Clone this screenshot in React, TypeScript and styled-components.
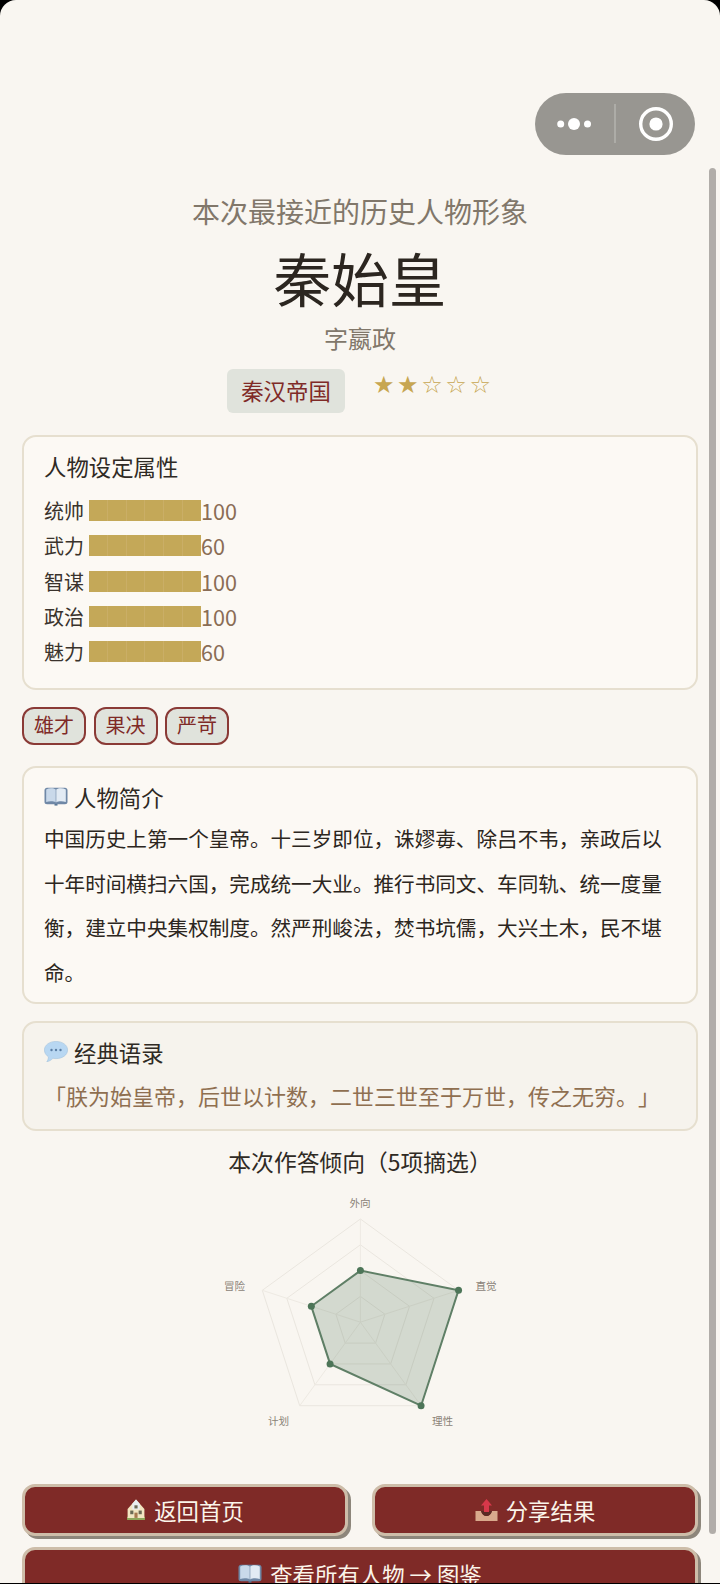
import { FC } from "react";
import styled, { createGlobalStyle } from "styled-components";

const GlobalStyle = createGlobalStyle`
  html, body {
    margin: 0;
    padding: 0;
    background: #000;
  }
  * {
    box-sizing: border-box;
  }
`

const Phone = styled.div`
  position: relative;
  width: 720px;
  height: 1583px;
  overflow: hidden;
  background: #f9f6f1;
  border-radius: 16px 16px 0 0;
  font-family: "Noto Sans CJK SC", "Noto Sans", sans-serif;
  color: #2c2620;
  text-spacing-trim: space-all;
`

const Capsule = styled.div`
  position: absolute;
  top: 93px;
  left: 535px;
  width: 160px;
  height: 62px;
  z-index: 2;
`

const ScrollThumb = styled.div`
  position: absolute;
  top: 168px;
  left: 709px;
  width: 7px;
  height: 1366px;
  border-radius: 4px;
  background: #b1ada9;
  z-index: 2;
`

const Content = styled.div`
  padding: 191px 22px 0 22px;
`

const Header = styled.div`
  display: flex;
  flex-direction: column;
  align-items: center;
`

const Subtitle = styled.div`
  font-size: 28px;
  line-height: 40px;
  color: #81776a;
`

const Name = styled.div`
  margin-top: 6px;
  font-size: 57.6px;
  line-height: 80px;
  color: #2c2620;
`

const Courtesy = styled.div`
  margin-top: 3px;
  font-size: 24px;
  line-height: 36px;
  color: #81776a;
`

const BadgeRow = styled.div`
  margin-top: 13px;
  padding-right: 2px;
  display: flex;
  align-items: flex-start;
  gap: 28px;
`

const Badge = styled.div`
  width: 118px;
  height: 44px;
  border-radius: 6px;
  background: #e0e3dc;
  color: #7f2a27;
  font-size: 22.4px;
  line-height: 42px;
  text-align: center;
`

const Stars = styled.div`
  display: flex;
  width: 118px;
  justify-content: space-between;
  font-family: "DejaVu Sans", sans-serif;
  font-size: 24px;
  line-height: 32px;
  color: #c7a651;
`

const Card = styled.section<{ $tint?: boolean; $gap?: number; $bottom: number }>`
  margin-top: ${props => props.$gap ?? 17}px;
  border: 2px solid #e6dfcf;
  border-radius: 14px;
  background: ${props => (props.$tint ? "#f6f3ed" : "#fcf9f4")};
  padding: 11px 20px ${props => props.$bottom}px 20px;
`

const CardTitle = styled.div`
  display: flex;
  align-items: center;
  gap: 6px;
  font-size: 22.4px;
  line-height: 36px;
  color: #2f2a24;
`

const StatList = styled.div`
  margin-top: 9px;
  padding-bottom: 2px;
`

const StatRow = styled.div`
  display: flex;
  align-items: center;
  height: 35.3px;
  font-size: 20px;
`

const StatLabel = styled.span`
  width: 45px;
  color: #3a332c;
`

const Bar = styled.div`
  display: flex;
  width: 112px;
  height: 21px;
`

const BarCell = styled.div`
  flex: 1;
  background: #c4a858;
  border-right: 1px solid #caae66;

  &:last-child {
    border-right: 0;
  }
`

const StatValue = styled.span`
  font-size: 21.6px;
  color: #8a6d55;
`

const TagRow = styled.div`
  margin-top: 17px;
  display: flex;
  gap: 7.5px;
`

const Tag = styled.div`
  width: 64px;
  height: 38px;
  border: 2px solid #8a3a36;
  border-radius: 12px;
  background: #e0e3dc;
  color: #7f2a27;
  font-size: 20px;
  line-height: 32px;
  text-align: center;
`

const Bio = styled.p`
  margin: 1px 0 0;
  font-size: 20.6px;
  line-height: 44.6px;
  color: #2c2620;
`

const Quote = styled.p`
  margin: 5px 0 0;
  font-size: 22px;
  line-height: 40px;
  color: #8f6f50;
  white-space: nowrap;
`

const ChartTitle = styled.div`
  margin-top: 14px;
  font-size: 22.8px;
  line-height: 34px;
  text-align: center;
  color: #2f2a24;
`

const ChartBox = styled.div`
  display: flex;
  justify-content: center;
  height: 252px;
  margin-top: 5px;
`

const ButtonRow = styled.div`
  margin-top: 48px;
  display: grid;
  grid-template-columns: 1fr 1fr;
  gap: 24px;
`

const ActionButton = styled.button<{ $wide?: boolean }>`
  display: flex;
  align-items: center;
  justify-content: center;
  gap: 8px;
  width: 100%;
  height: 52px;
  margin-top: ${props => (props.$wide ? "11px" : "0")};
  padding: ${props => (props.$wide ? "2px" : "0")} 0 0;
  border: 3px solid #cdbda9;
  border-radius: 13px;
  background: #7f2a27;
  box-shadow: 3px 3px 0 #8d867b;
  color: #fbf5ea;
  font-family: inherit;
  font-size: 22.4px;
  line-height: 1;
`

const MenuIcon: FC = () => (
  <svg width="160" height="62" viewBox="0 0 160 62">
    <rect width="160" height="62" rx="31" fill="#989691" />
    <circle cx="25.7" cy="31" r="3.5" fill="#fff" />
    <circle cx="39" cy="31" r="6" fill="#fff" />
    <circle cx="52.5" cy="31" r="3.5" fill="#fff" />
    <rect x="79.5" y="11" width="1" height="39" fill="#c2c1bd" />
    <circle cx="121" cy="31" r="15.3" fill="none" stroke="#fff" strokeWidth="3.4" />
    <circle cx="121" cy="31" r="6.6" fill="#fff" />
  </svg>
)

const BookIcon: FC = () => (
  <svg width="24" height="19" viewBox="0 0 24 19">
    <path d="M0.5 3.5 C0.5 1.6 1.6 0.8 3 0.8 H21 C22.4 0.8 23.5 1.6 23.5 3.5 V15 C23.5 16.6 22.4 17.2 21 17.2 H3 C1.6 17.2 0.5 16.6 0.5 15 Z" fill="#6f88a6" />
    <path d="M2.2 2.4 C5.5 1 9.5 1 11.7 2.6 V15.4 C9.5 14 5.5 14 2.2 15 Z" fill="#c9d9ea" />
    <path d="M21.8 2.4 C18.5 1 14.5 1 12.3 2.6 V15.4 C14.5 14 18.5 14 21.8 15 Z" fill="#e2ebf4" />
    <rect x="10.5" y="17" width="3" height="1.6" fill="#5b7896" />
  </svg>
)

const BubbleIcon: FC = () => (
  <svg width="24" height="21" viewBox="0 0 24 21">
    <path d="M12 0.4 C18.4 0.4 23.6 4 23.6 9 C23.6 14 18.4 17.6 12 17.6 C10.9 17.6 9.9 17.5 8.9 17.3 C7.4 19 5 20.4 2.8 20.7 C3.8 19.4 4.4 17.6 4.4 15.8 C2 14.2 0.4 11.8 0.4 9 C0.4 4 5.6 0.4 12 0.4 Z" fill="#b8d7f2" stroke="#a3c2de" strokeWidth="0.6" />
    <circle cx="7.5" cy="9" r="1.2" fill="#5b7fa5" />
    <circle cx="12" cy="9" r="1.2" fill="#5b7fa5" />
    <circle cx="16.5" cy="9" r="1.2" fill="#5b7fa5" />
  </svg>
)

const HouseIcon: FC = () => (
  <svg width="20" height="21" viewBox="0 0 19 20">
    <rect x="1" y="17" width="17" height="3" fill="#8ea65a" />
    <path d="M9.5 0.5 L17.5 9.5 V18 H1.5 V9.5 Z" fill="#f2e6c2" />
    <path d="M9.5 0.5 L13 4.5 V10 H6 V4.5 Z" fill="#e7eff0" />
    <rect x="4" y="11" width="3" height="3.5" fill="#6b6a55" />
    <rect x="12" y="11" width="3" height="3.5" fill="#6b6a55" />
    <rect x="8" y="6" width="3" height="3" fill="#6b6a55" />
    <rect x="8" y="13" width="3" height="5" fill="#a5794f" />
  </svg>
)

const OutboxIcon: FC = () => (
  <svg width="23" height="22" viewBox="0 0 23 22">
    <path d="M0.5 12 H6 C7 15.5 9 17 11.5 17 C14 17 16 15.5 17 12 H22.5 V22 H0.5 Z" fill="#d9a98c" />
    <path d="M6 12 H17 C16 15.5 14 17 11.5 17 C9 17 7 15.5 6 12 Z" fill="#5b2a24" />
    <path d="M11.5 0 L17 6.5 H14 V13 H9 V6.5 H6 Z" fill="#d8384a" />
  </svg>
)

type Point = { x: number; y: number }

const CX = 150.4
const CY = 138.2
const RADIUS = 103.2

const vertex = (index: number, ratio: number): Point => {
  const angle = -Math.PI / 2 + (index * 2 * Math.PI) / 5
  return {
    x: CX + Math.cos(angle) * RADIUS * ratio,
    y: CY + Math.sin(angle) * RADIUS * ratio,
  }
}

const toPoints = (ratios: number[]) =>
  ratios
    .map((ratio, i) => {
      const p = vertex(i, ratio)
      return `${p.x.toFixed(1)},${p.y.toFixed(1)}`
    })
    .join(" ")

const axisLabels = [
  { text: "外向", x: 150, y: 18 },
  { text: "直觉", x: 276, y: 101.5 },
  { text: "理性", x: 232.5, y: 236 },
  { text: "计划", x: 68.5, y: 236 },
  { text: "冒险", x: 24.5, y: 101.5 },
]

const answers = [0.5, 1, 1, 0.5, 0.5]

const RadarChart: FC = () => (
  <svg width="300" height="252" viewBox="0 0 300 252">
    {[0.25, 0.5, 0.75, 1].map(ring => (
      <polygon
        key={ring}
        points={toPoints([ring, ring, ring, ring, ring])}
        fill="none"
        stroke="#eae6df"
        strokeWidth="1"
      />
    ))}
    {answers.map((_, i) => {
      const p = vertex(i, 1)
      return <line key={i} x1={CX} y1={CY} x2={p.x} y2={p.y} stroke="#eeeae3" strokeWidth="1" />
    })}
    <polygon points={toPoints(answers)} fill="rgba(78,115,88,0.22)" stroke="#5f7f66" strokeWidth="2" />
    {answers.map((ratio, i) => {
      const p = vertex(i, ratio)
      return <circle key={i} cx={p.x} cy={p.y} r="3.5" fill="#4d7558" />
    })}
    {axisLabels.map(label => (
      <text
        key={label.text}
        x={label.x}
        y={label.y}
        fontSize="10.6"
        fill="#8b8378"
        textAnchor="middle"
        dominantBaseline="central"
      >
        {label.text}
      </text>
    ))}
  </svg>
)

const stats = [
  { label: "统帅", value: 100 },
  { label: "武力", value: 60 },
  { label: "智谋", value: 100 },
  { label: "政治", value: 100 },
  { label: "魅力", value: 60 },
]

const App: FC = () => (
  <Phone>
    <GlobalStyle />
    <Capsule>
      <MenuIcon />
    </Capsule>
    <ScrollThumb />
    <Content>
      <Header>
        <Subtitle>本次最接近的历史人物形象</Subtitle>
        <Name>秦始皇</Name>
        <Courtesy>字嬴政</Courtesy>
        <BadgeRow>
          <Badge>秦汉帝国</Badge>
          <Stars>
            <span>★</span>
            <span>★</span>
            <span>☆</span>
            <span>☆</span>
            <span>☆</span>
          </Stars>
        </BadgeRow>
      </Header>

      <Card $gap={22} $bottom={16.5}>
        <CardTitle>人物设定属性</CardTitle>
        <StatList>
          {stats.map(stat => (
            <StatRow key={stat.label}>
              <StatLabel>{stat.label}</StatLabel>
              <Bar>
                {[0, 1, 2, 3, 4, 5].map(cell => (
                  <BarCell key={cell} />
                ))}
              </Bar>
              <StatValue>{stat.value}</StatValue>
            </StatRow>
          ))}
        </StatList>
      </Card>

      <TagRow>
        <Tag>雄才</Tag>
        <Tag>果决</Tag>
        <Tag>严苛</Tag>
      </TagRow>

      <Card $gap={21} $bottom={7.6}>
        <CardTitle>
          <BookIcon />
          人物简介
        </CardTitle>
        <Bio>
          中国历史上第一个皇帝。十三岁即位，诛嫪毐、除吕不韦，亲政后以十年时间横扫六国，完成统一大业。推行书同文、车同轨、统一度量衡，建立中央集权制度。然严刑峻法，焚书坑儒，大兴土木，民不堪命。
        </Bio>
      </Card>

      <Card $tint $bottom={14}>
        <CardTitle>
          <BubbleIcon />
          经典语录
        </CardTitle>
        <Quote>「朕为始皇帝，后世以计数，二世三世至于万世，传之无穷。」</Quote>
      </Card>

      <ChartTitle>本次作答倾向（5项摘选）</ChartTitle>
      <ChartBox>
        <RadarChart />
      </ChartBox>

      <ButtonRow>
        <ActionButton>
          <HouseIcon />
          返回首页
        </ActionButton>
        <ActionButton>
          <OutboxIcon />
          分享结果
        </ActionButton>
      </ButtonRow>
      <ActionButton $wide>
        <BookIcon />
        查看所有人物 → 图鉴
      </ActionButton>
    </Content>
  </Phone>
)

export default App;
